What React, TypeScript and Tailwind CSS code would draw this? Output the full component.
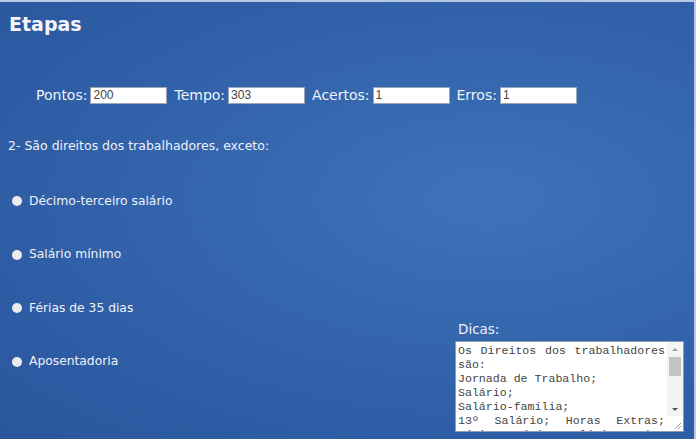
import React from "react";

const comic = "font-['Comic_Sans_MS','DejaVu_Sans',sans-serif]";

const placar = [
  { label: "Pontos:", value: "200" },
  { label: "Tempo:", value: "303" },
  { label: "Acertos:", value: "1" },
  { label: "Erros:", value: "1" },
];

const opcoes = [
  "Décimo-terceiro salário",
  "Salário mínimo",
  "Férias de 35 dias",
  "Aposentadoria",
];

const dicas =
  "Os Direitos dos trabalhadores são:\nJornada de Trabalho;\nSalário;\nSalário-família;\n13º Salário; Horas Extras; Férias; Décimo Salário; Aviso Prévio;";

export default function App() {
  return (
    <div
      className={`w-[696px] h-[439px] overflow-hidden border-t-2 border-r-2 border-[#b9c9e3] bg-[radial-gradient(ellipse_at_70%_45%,#3e72ba_0%,#3364ac_45%,#2a569d_100%)] text-white ${comic}`}
    >
      <h1 className="pl-[9px] pt-[10px] text-[19px] font-bold leading-6 text-[#f4f6fa]">
        Etapas
      </h1>

      <div className="mt-[49px] flex items-center pl-[36px] text-[14px] leading-5">
        {placar.map((p) => (
          <div key={p.label} className="mr-[7px] flex items-center">
            <span className="mr-[3px] text-[#eef2f8]">{p.label}</span>
            <input
              readOnly
              value={p.value}
              className="h-[17px] w-[77px] border border-[#9aa6b8] bg-white px-[2px] font-['Liberation_Sans',sans-serif] text-[12px] text-[#444] outline-none"
            />
          </div>
        ))}
      </div>

      <p className="mt-[33px] pl-[8px] text-[12.5px] leading-4 text-[#eef2f8]">
        2- São direitos dos trabalhadores, exceto:
      </p>

      <div className="mt-[39px] flex justify-between pr-[10px]">
        <ul className="flex flex-col gap-[37.5px] pl-[12px]">
          {opcoes.map((o) => (
            <li key={o} className="flex h-4 items-center text-[12.3px] text-[#eef2f8]">
              <span className="mr-[7px] h-[10px] w-[10px] rounded-full bg-[#ececec]" />
              {o}
            </li>
          ))}
        </ul>

        <div className="mt-[128px] flex flex-col">
          <span className="pl-[3px] text-[13.5px] leading-4 text-[#eef2f8]">Dicas:</span>
          <div className="mt-[4px] flex h-[91px] w-[229px] border border-[#8f9db3] bg-white">
            <textarea
              readOnly
              value={dicas}
              className="h-full min-w-0 flex-1 resize-none overflow-hidden px-[2px] pt-[2px] text-justify font-['Liberation_Mono',monospace] text-[11.6px] leading-[14px] text-[#444] outline-none"
            />
            {/* barra de rolagem */}
            <div className="flex w-[16px] flex-col bg-[#f4f4f4]">
              <div className="flex h-[15px] items-center justify-center">
                <span className="h-0 w-0 border-x-[3px] border-b-[3px] border-x-transparent border-b-[#a0a0a0]" />
              </div>
              <div className="mx-[2px] h-[19px] bg-[#c4c4c4]" />
              <div className="flex-1" />
              <div className="flex h-[14px] items-center justify-center">
                <span className="h-0 w-0 border-x-[3px] border-t-[3px] border-x-transparent border-t-[#505050]" />
              </div>
              <div className="flex h-[15px] items-end justify-end bg-white p-[2px]">
                <svg width="7" height="7" viewBox="0 0 7 7">
                  <path d="M7 1 L1 7 M7 4 L4 7" stroke="#9a9a9a" strokeWidth="1" />
                </svg>
              </div>
            </div>
          </div>
        </div>
      </div>
    </div>
  );
}
